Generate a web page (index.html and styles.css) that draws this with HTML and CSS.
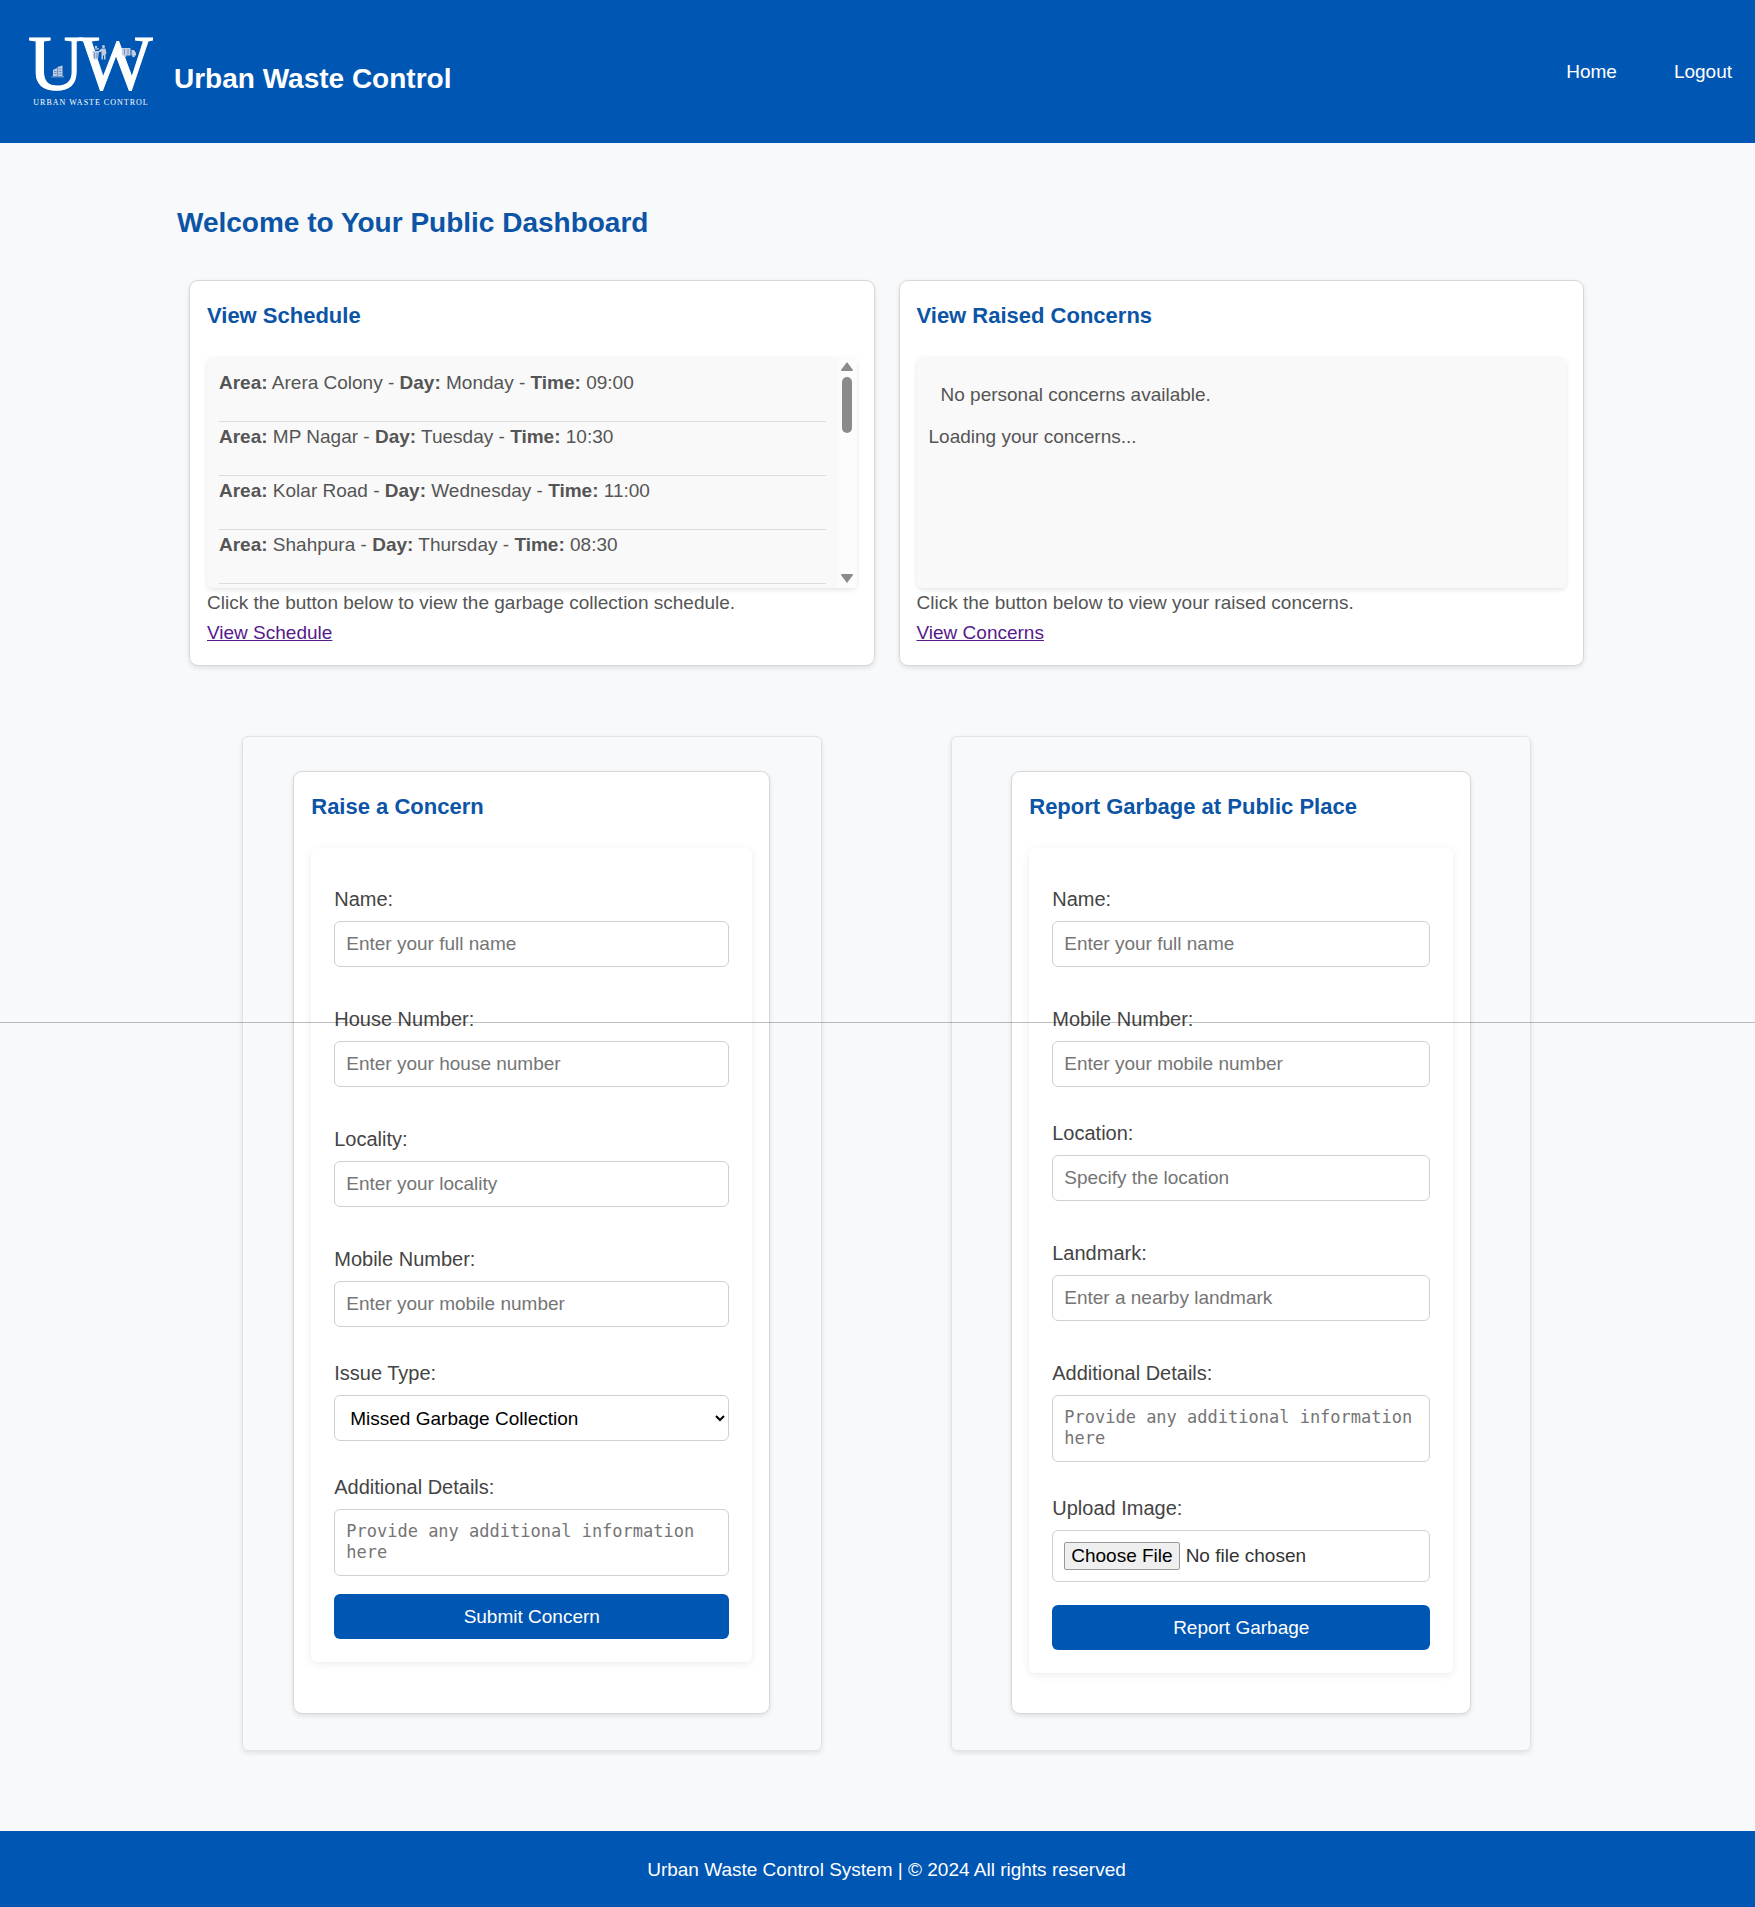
FILE: index.html
```html
<!DOCTYPE html>
<html lang="en">
<head>
<meta charset="utf-8">
<title>Urban Waste Control</title>
<link rel="stylesheet" href="styles.css">
</head>
<body>
<header class="site-header">
  <a class="brand" href="#">
    <svg class="logo" viewBox="0 0 128 100" role="img" aria-label="UW Urban Waste Control">
      <g class="logo-letters"><text x="1" y="67">U</text><text x="52" y="67">W</text></g>
      <text class="logo-tagline" x="64" y="83">URBAN WASTE CONTROL</text>
      <g fill="#c3cde0">
        <path d="M26 48l4-2v8h-4zM30.500 45l5-1.500v10.500h-5zM24.500 54.500h12.500v.8h-12.500z"/>
        <path d="M65.500 29h6.500l-1 8.500h-4.500zM66 27l5.500-1 .3 1.500h-6z"/>
        <circle cx="69" cy="25" r="1.200"/>
        <circle cx="76.500" cy="24.500" r="1.500"/>
        <path d="M74.500 26.500h4l1 5-1 .5v5.500h-1.500v-4h-1v4h-1.500v-8l-3 1-.5-1z"/>
        <path d="M95 26h8.500v7.500h-8.500zM104.500 28h2.500l2 3v2.500h-4.500z"/>
        <circle cx="98" cy="34" r="1.300"/><circle cx="106.500" cy="34" r="1.300"/>
      </g>
      <path class="logo-lines" d="M27 49.500h2.500M27 51.500h2.500M31.500 47h3M31.500 49.500h3M31.500 52h3M67.500 30.500v5.500M70 30.500v5.500M97.500 27v5.500M101 27v5.500"/>
    </svg>
    <h1 class="brand-name">Urban Waste Control</h1>
  </a>
  <nav class="site-nav"><a href="#">Home</a><a href="#">Logout</a></nav>
</header>

<main class="dashboard">
  <h2 class="page-title">Welcome to Your Public Dashboard</h2>

  <div class="columns">
    <section class="card summary">
      <h3 class="card-title">View Schedule</h3>
      <div class="panel scroll-panel">
        <ul class="schedule">
          <li><strong>Area:</strong> Arera Colony - <strong>Day:</strong> Monday - <strong>Time:</strong> 09:00</li>
          <li><strong>Area:</strong> MP Nagar - <strong>Day:</strong> Tuesday - <strong>Time:</strong> 10:30</li>
          <li><strong>Area:</strong> Kolar Road - <strong>Day:</strong> Wednesday - <strong>Time:</strong> 11:00</li>
          <li><strong>Area:</strong> Shahpura - <strong>Day:</strong> Thursday - <strong>Time:</strong> 08:30</li>
        </ul>
        <div class="scrollbar" aria-hidden="true">
          <svg width="12" height="9" viewBox="0 0 12 9"><path d="M6 0l6 8q0 1-1 1H1q-1 0-1-1z"/></svg>
          <span class="thumb"></span>
          <svg class="arrow-down" width="12" height="9" viewBox="0 0 12 9"><path d="M6 9L0 1q0-1 1-1h10q1 0 1 1z"/></svg>
        </div>
      </div>
      <p>Click the button below to view the garbage collection schedule.</p>
      <a class="visited" href="#">View Schedule</a>
    </section>

    <section class="card summary">
      <h3 class="card-title">View Raised Concerns</h3>
      <div class="panel concerns">
        <p class="empty">No personal concerns available.</p>
        <p>Loading your concerns...</p>
      </div>
      <p>Click the button below to view your raised concerns.</p>
      <a class="visited" href="#">View Concerns</a>
    </section>
  </div>

  <div class="columns forms">
    <div class="frame">
      <section class="card form-card">
        <h3 class="card-title">Raise a Concern</h3>
        <form class="form">
          <div class="field"><label for="c-name">Name:</label><input id="c-name" type="text" placeholder="Enter your full name"></div>
          <div class="field"><label for="c-house">House Number:</label><input id="c-house" type="text" placeholder="Enter your house number"></div>
          <div class="field"><label for="c-locality">Locality:</label><input id="c-locality" type="text" placeholder="Enter your locality"></div>
          <div class="field tight"><label for="c-mobile">Mobile Number:</label><input id="c-mobile" type="tel" placeholder="Enter your mobile number"></div>
          <div class="field tight"><label for="c-issue">Issue Type:</label><select id="c-issue"><option>Missed Garbage Collection</option></select></div>
          <div class="field last"><label for="c-details">Additional Details:</label><textarea id="c-details" rows="2" placeholder="Provide any additional information here"></textarea></div>
          <button class="submit" type="submit">Submit Concern</button>
        </form>
      </section>
    </div>

    <div class="frame">
      <section class="card form-card narrow">
        <h3 class="card-title">Report Garbage at Public Place</h3>
        <form class="form">
          <div class="field"><label for="g-name">Name:</label><input id="g-name" type="text" placeholder="Enter your full name"></div>
          <div class="field tight"><label for="g-mobile">Mobile Number:</label><input id="g-mobile" type="tel" placeholder="Enter your mobile number"></div>
          <div class="field"><label for="g-location">Location:</label><input id="g-location" type="text" placeholder="Specify the location"></div>
          <div class="field"><label for="g-landmark">Landmark:</label><input id="g-landmark" type="text" placeholder="Enter a nearby landmark"></div>
          <div class="field tight"><label for="g-details">Additional Details:</label><textarea id="g-details" rows="2" placeholder="Provide any additional information here"></textarea></div>
          <div class="field upload"><label for="g-image">Upload Image:</label><input id="g-image" type="file"></div>
          <button class="submit" type="submit">Report Garbage</button>
        </form>
      </section>
    </div>
  </div>
</main>

<footer class="site-footer">Urban Waste Control System | © 2024 All rights reserved</footer>
<div class="page-rule"></div>
</body>
</html>
```
FILE: styles.css
```css
* { box-sizing: border-box; }

body {
  position: relative;
  margin: 0;
  background: #f8f9fa;
  color: #333;
  font: 19px/30px "Liberation Sans", Arial, sans-serif;
}

h1, h2, h3, p, ul { margin: 0; padding: 0; }

.site-header {
  display: flex;
  align-items: center;
  justify-content: space-between;
  height: 143px;
  padding: 0 23px 0 27px;
  background: #0056b3;
  color: #fff;
}
.site-header a { color: #fff; text-decoration: none; }
.brand { display: flex; align-items: center; gap: 19px; }
.logo { width: 128px; height: 100px; overflow: visible; }
.logo-letters { fill: #fff; stroke: #fff; stroke-width: 1; font: 78px "Liberation Serif", serif; }
.logo-tagline { fill: #fff; font: 8px "Liberation Serif", serif; letter-spacing: 1px; text-anchor: middle; }
.logo-lines { fill: none; stroke: #6f93c8; stroke-width: 1; }
.brand-name { padding-top: 14px; font-size: 28px; line-height: 32px; }
.site-nav { display: flex; gap: 57px; }

.dashboard { padding: 58px 159px 80px 177px; }
.page-title { margin-bottom: 23px; color: #0c54a6; font-size: 28px; line-height: 44px; }

.columns { display: grid; grid-template-columns: 1fr 1fr; }
.forms { margin-top: 58px; justify-items: center; }

.card {
  padding: 17px;
  background: #fff;
  border: 1px solid #d6d8da;
  border-radius: 9px;
  box-shadow: 0 2px 5px rgba(0, 0, 0, .1);
}
.card-title { margin-bottom: 23px; color: #0c54a6; font-size: 22px; line-height: 36px; }
.summary { margin: 12px; color: #555; }
.visited { display: inline-block; color: #551a8b; }

.panel {
  height: 231px;
  background: #f9f9f9;
  border-radius: 6px;
  box-shadow: 0 2px 5px rgba(0, 0, 0, .1);
}
.scroll-panel { display: flex; }
.schedule { flex: 1; padding: 11px 12px 0; list-style: none; }
.schedule li { padding-bottom: 23px; border-bottom: 1px solid #ddd; }
.scrollbar {
  display: flex;
  flex-direction: column;
  align-items: center;
  gap: 6px;
  width: 19px;
  padding: 5px 0;
  background: #fcfcfc;
  fill: #8b8b8b;
}
.thumb { width: 10px; height: 56px; border-radius: 5px; background: #8b8b8b; }
.arrow-down { margin-top: auto; }
.concerns { padding: 11px 12px; }
.empty { padding: 12px; }

.frame {
  display: flex;
  justify-content: center;
  width: 100%;
  max-width: 580px;
  padding: 34px 0 36px;
  border: 1px solid #e1e3e5;
  border-radius: 6px;
  box-shadow: 0 2px 5px rgba(0, 0, 0, .1);
}
.form-card { width: 100%; max-width: 477px; padding-bottom: 50px; }
.form-card.narrow { max-width: 460px; padding-bottom: 40px; }

.form {
  padding: 35px 23px 23px;
  border-radius: 6px;
  box-shadow: 0 2px 9px rgba(0, 0, 0, .08);
}
.field { margin-bottom: 36px; }
.field.tight { margin-bottom: 30px; }
.field.upload { margin-bottom: 23px; }
.field.last { margin-bottom: 18px; }
.field label {
  display: block;
  margin-bottom: 6px;
  color: #444;
  font-size: 20px;
  line-height: 32px;
}
.field input, .field select, .field textarea {
  display: block;
  width: 100%;
  height: 46px;
  margin: 0;
  padding: 11px;
  background: #fff;
  border: 1px solid #d0d0d0;
  border-radius: 6px;
  font: 19px/22px "Liberation Sans", Arial, sans-serif;
}
.field select { padding: 0 0 0 11px; color: #000; }
.field textarea {
  height: 67px;
  font: 17px/21px "DejaVu Sans Mono", monospace;
  resize: none;
  overflow: hidden;
}
.field input::placeholder, .field textarea::placeholder { color: #757575; }
.field input[type="file"] { height: 52px; color: #333; line-height: 28px; }
.field input::file-selector-button {
  height: 28px;
  margin-right: 6px;
  padding: 0 6px;
  background: #efefef;
  border: 1px solid #999;
  border-radius: 2px;
  color: #000;
  font: 19px/24px "Liberation Sans", Arial, sans-serif;
}
.submit {
  display: block;
  width: 100%;
  height: 45px;
  background: #0056b3;
  border: 0;
  border-radius: 6px;
  color: #fff;
  font: 19px/22px "Liberation Sans", Arial, sans-serif;
}

.site-footer {
  padding: 24px 23px 22px 41px;
  background: #0056b3;
  color: #fff;
  text-align: center;
}

.page-rule {
  position: absolute;
  top: 1022px;
  left: 0;
  right: 0;
  height: 1px;
  background: rgba(0, 0, 0, .25);
}
```
